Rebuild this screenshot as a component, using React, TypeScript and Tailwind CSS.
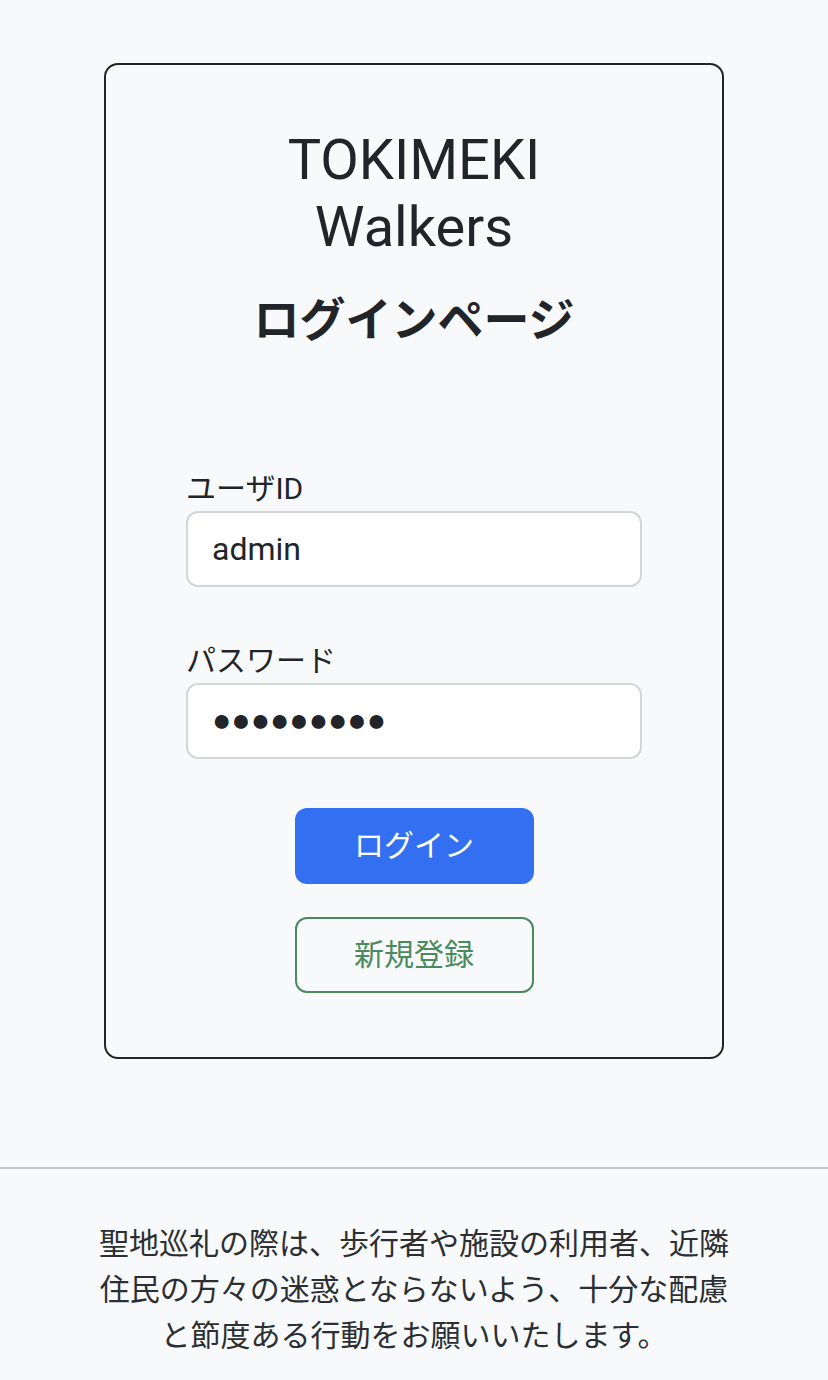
import { useState } from "react";

const jp = "font-['Roboto','Noto_Sans_CJK_JP',sans-serif]";

export default function App() {
  const [userId, setUserId] = useState("admin");
  const [password, setPassword] = useState("●●●●●●●●●");

  return (
    <div className={`min-h-[1380px] bg-[#f8f9fa] text-[#212529] ${jp}`}>
      <main className="flex justify-center pt-[63px]">
        {/* Login card */}
        <div className="w-[620px] rounded-[14px] border-2 border-[#212529] px-[80px] pt-[62px] pb-[64px]">
          <h1 className="text-center text-[56px] leading-[1.2] font-normal">
            TOKIMEKI
            <br />
            Walkers
          </h1>
          <h2 className="mt-[32px] text-center text-[46px] leading-[1.2] font-bold">ログインページ</h2>

          <form className="mt-[117px] flex flex-col" onSubmit={(e) => e.preventDefault()}>
            <label className="text-[30px] leading-[45px]" htmlFor="user">
              ユーザID
            </label>
            <input
              id="user"
              type="text"
              value={userId}
              onChange={(e) => setUserId(e.target.value)}
              className="h-[76px] w-full rounded-[12px] border-2 border-[#d3d6d9] bg-white px-[24px] text-[32px] leading-[48px] outline-none"
            />

            <label className="mt-[51px] text-[30px] leading-[45px]" htmlFor="pass">
              パスワード
            </label>
            {/* masked value drawn with ● so the dots match the reference */}
            <input
              id="pass"
              type="text"
              value={password}
              onChange={(e) => setPassword(e.target.value)}
              className="h-[76px] w-full rounded-[12px] border-2 border-[#d3d6d9] bg-white px-[24px] font-['Liberation_Sans',sans-serif] text-[32px] leading-[48px] outline-none"
            />

            <div className="mt-[49px] flex flex-col items-center gap-[33px]">
              <button
                type="submit"
                className="h-[76px] w-[239px] rounded-[12px] bg-[#3370f1] text-[30px] text-white"
              >
                ログイン
              </button>
              <button
                type="button"
                className="h-[76px] w-[239px] rounded-[12px] border-2 border-[#4a8a5e] text-[30px] text-[#4a8a5e]"
              >
                新規登録
              </button>
            </div>
          </form>
        </div>
      </main>

      <footer className="mt-[108px] border-t-2 border-[#c8c8c8] pt-[52px] pb-[40px]">
        <p className="text-center text-[30px] leading-[46px] text-[#2b2f33]">
          <span className="block">聖地巡礼の際は、歩行者や施設の利用者、近隣</span>
          <span className="block">住民の方々の迷惑とならないよう、十分な配慮</span>
          <span className="block">と節度ある行動をお願いいたします。</span>
        </p>
      </footer>
    </div>
  );
}
